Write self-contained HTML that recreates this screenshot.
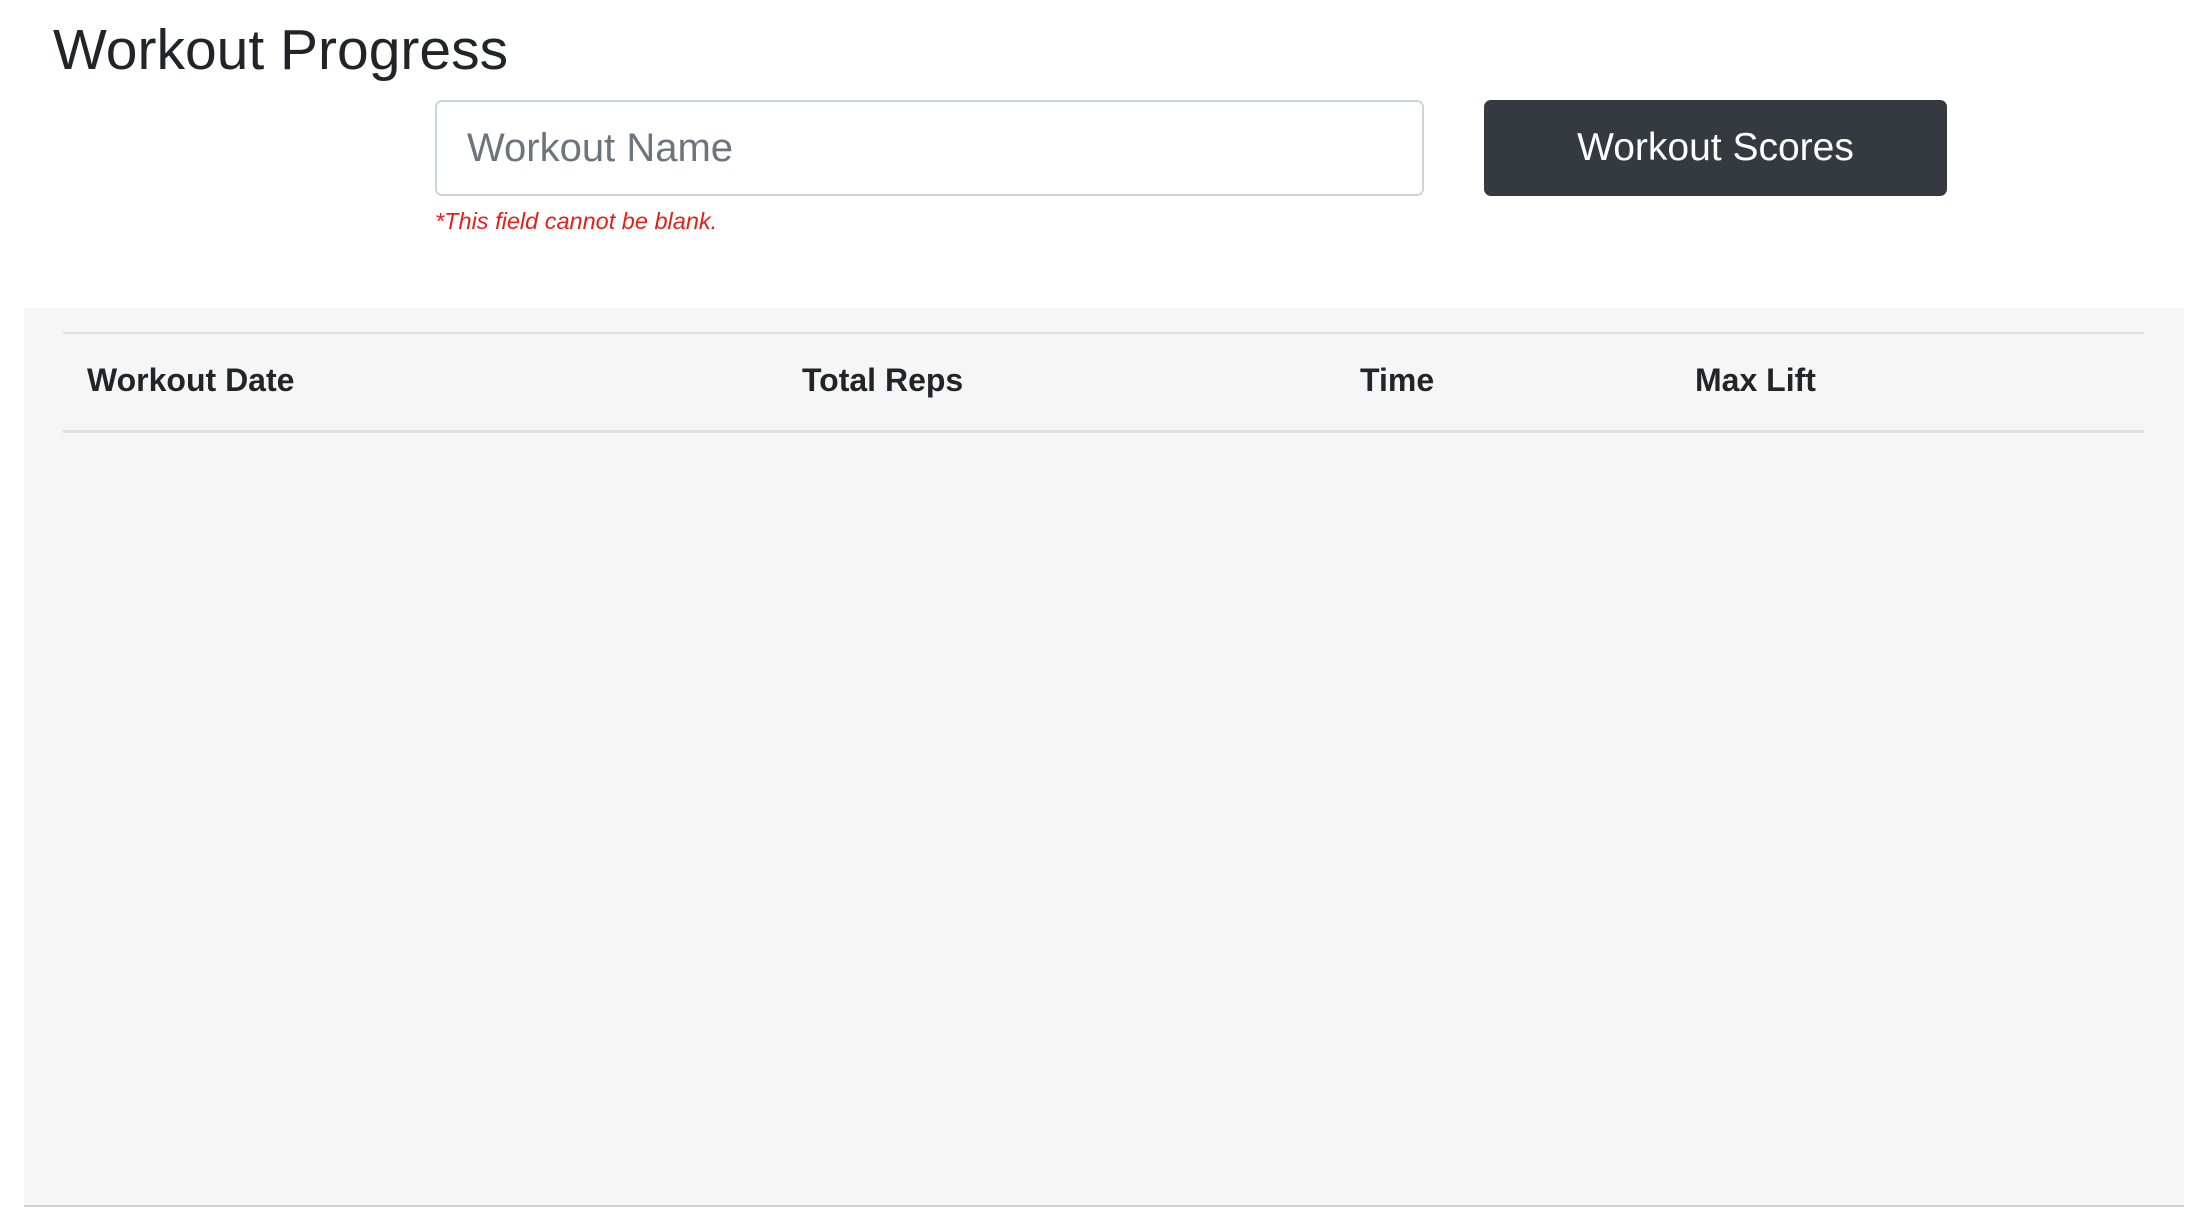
<!DOCTYPE html>
<html><head><meta charset="utf-8"><style>
html,body{margin:0;padding:0;background:#fff;width:2206px;height:1230px;overflow:hidden;font-family:"Liberation Sans",sans-serif;color:#212529}
.abs{position:absolute}
h1{position:absolute;left:53px;top:18px;margin:0;font-size:57px;font-weight:normal;line-height:64px;letter-spacing:0px}
.inp{left:435px;top:100px;width:985px;height:92px;border:2px solid #ced4da;border-radius:7px;background:#fff}
.ph{left:467px;top:125px;font-size:40px;line-height:46px;color:#6c757d}
.btn{left:1484px;top:100px;width:463px;height:96px;background:#343a40;border-radius:7px;color:#fff;font-size:39px;line-height:96px;text-align:center}
.err{left:435px;top:207px;font-size:23.5px;font-style:italic;color:#e3201b;line-height:28px}
.panel{left:24px;top:308px;width:2160px;height:897px;background:#f6f6f6;border-bottom:2px solid #cfcfcf}
.l1{left:63px;top:332px;width:2081px;height:2px;background:#dee2e6}
.l2{left:63px;top:430px;width:2081px;height:3px;background:#dee2e6}
.th{top:362px;font-size:32px;font-weight:bold;line-height:36px}
</style></head><body>
<h1>Workout Progress</h1>
<div class="abs inp"></div>
<div class="abs ph">Workout Name</div>
<div class="abs btn">Workout Scores</div>
<div class="abs err">*This field cannot be blank.</div>
<div class="abs panel"></div>
<div class="abs l1"></div>
<div class="abs l2"></div>
<div class="abs th" style="left:87px">Workout Date</div>
<div class="abs th" style="left:802px">Total Reps</div>
<div class="abs th" style="left:1360px">Time</div>
<div class="abs th" style="left:1695px">Max Lift</div>
</body></html>
